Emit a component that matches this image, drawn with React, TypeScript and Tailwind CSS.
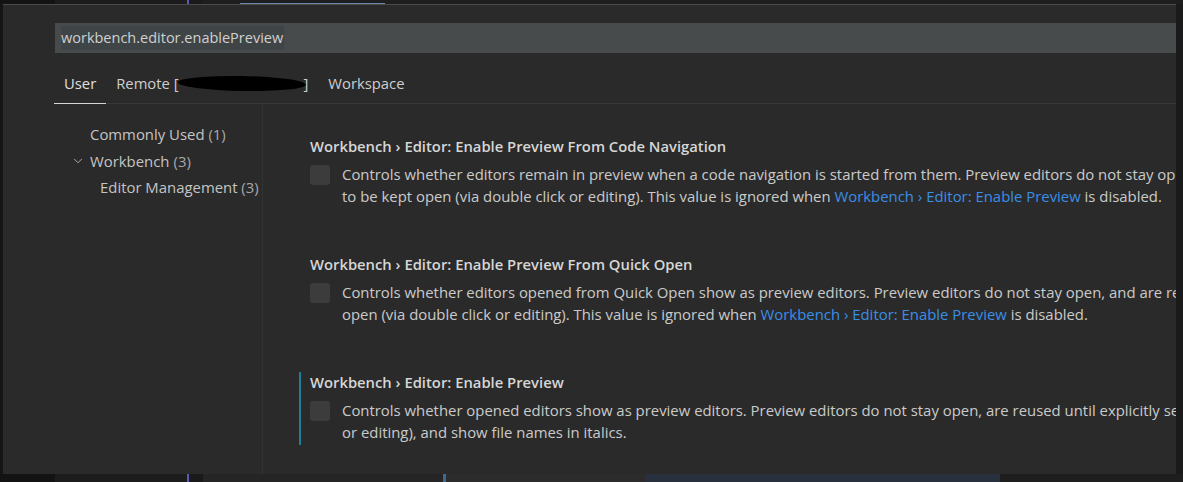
import { ChevronDown } from 'lucide-react';

const FONT = "font-['Open_Sans','Noto_Sans',sans-serif]";

type Piece = { text: string; link?: boolean };

const settings: { title: string; lines: Piece[][]; focused?: boolean }[] = [
  {
    title: 'Workbench › Editor: Enable Preview From Code Navigation',
    lines: [
      [
        {
          text: 'Controls whether editors remain in preview when a code navigation is started from them. Preview editors do not stay open, and are reused until explicitly set',
        },
      ],
      [
        { text: 'to be kept open (via double click or editing). This value is ignored when ' },
        { text: 'Workbench › Editor: Enable Preview', link: true },
        { text: ' is disabled.' },
      ],
    ],
  },
  {
    title: 'Workbench › Editor: Enable Preview From Quick Open',
    lines: [
      [
        {
          text: 'Controls whether editors opened from Quick Open show as preview editors. Preview editors do not stay open, and are reused until explicitly set to be kept',
        },
      ],
      [
        { text: 'open (via double click or editing). This value is ignored when ' },
        { text: 'Workbench › Editor: Enable Preview', link: true },
        { text: ' is disabled.' },
      ],
    ],
  },
  {
    title: 'Workbench › Editor: Enable Preview',
    focused: true,
    lines: [
      [
        {
          text: 'Controls whether opened editors show as preview editors. Preview editors do not stay open, are reused until explicitly set to be kept open (via double click',
        },
      ],
      [{ text: 'or editing), and show file names in italics.' }],
    ],
  },
];

const SettingItem = ({ title, lines, focused }: (typeof settings)[number]) => (
  <div
    className={`border-l-2 pl-[9px] pt-px pb-[2px] ${focused ? 'border-[#1f7f9a]' : 'border-transparent'}`}
  >
    <div className="text-[14.8px] leading-[18px] font-semibold text-[#d6d6d6] whitespace-nowrap">{title}</div>
    <div className="flex gap-3 mt-2">
      <div className="w-5 h-5 mt-[2px] shrink-0 rounded-[3px] bg-[#3c3c3c]" />
      <div className="text-[14.9px] leading-[22px] text-[#cacaca]">
        {lines.map((line, i) => (
          <div key={i} className="whitespace-nowrap">
            {line.map((p, j) => (
              <span key={j} className={p.link ? 'text-[#3a8ee6]' : ''}>
                {p.text}
              </span>
            ))}
          </div>
        ))}
      </div>
    </div>
  </div>
);

export default function App() {
  return (
    <div className={`w-[1183px] h-[482px] overflow-hidden bg-[#171717] flex flex-col ${FONT}`}>
      {/* top strip: neighbouring editor */}
      <div className="h-[4px] flex shrink-0">
        <div className="w-[55px] bg-[#131313]" />
        <div className="w-[132px] bg-[#1c1c1c]" />
        <div className="w-[2px] bg-[#5b5bb5]" />
        <div className="w-[14px] bg-[#1a1a1a]" />
        <div className="w-[37px] bg-[#1e1e1e]" />
        <div className="w-[145px] bg-[#1e1e1e] flex flex-col justify-end">
          <div className="h-px bg-[#6d86a8]" />
        </div>
        <div className="flex-1 bg-[#1e1e1e]" />
      </div>

      <div className="flex flex-1 min-h-0">
        <div className="w-[3px] bg-[#151515]" />
        {/* settings editor */}
        <div className="w-[1173px] flex flex-col bg-[#2a2a2a] border-t border-[#4b4b4b] overflow-hidden">
          <div className="pt-[18px] pl-[52px]">
            <div className="h-[30px] bg-[#474b4c] flex items-center pl-[6px] text-[14.5px] text-[#d0d0d0]">
              <span className="bg-[#3f4446] leading-[24px] pr-px">workbench.editor.enablePreview</span>
            </div>
          </div>

          {/* tabs */}
          <div className="ml-[51px] h-[51px] border-b border-[#383838] flex items-end text-[14.8px] text-[#cfcfcf]">
            <div className="px-[10px] h-[48px] pt-[8px] flex items-center border-b border-[#d6d6d6] -mb-px text-[#e0e0e0]">
              User
            </div>
            <div className="pl-[10px] h-[48px] pt-[8px] flex items-center">
              Remote [
              <span className="inline-block w-[128px] h-[15px] bg-black rounded-[50%] -mr-[2px] -ml-[1px] rotate-[1deg]" />
              ]
            </div>
            <div className="pl-[20px] h-[48px] pt-[8px] flex items-center">Workspace</div>
          </div>

          <div className="flex flex-1 min-h-0">
            {/* tree */}
            <div className="w-[260px] shrink-0 border-r border-[#323232] pt-[17px] text-[14.9px] leading-[26.5px] text-[#c4c4c4]">
              <div className="pl-[87px] whitespace-nowrap">
                Commonly Used <span className="text-[#a8a8a8]">(1)</span>
              </div>
              <div className="pl-[68px] flex items-center whitespace-nowrap">
                <ChevronDown className="w-[14px] h-[14px] mr-[5px] text-[#bdbdbd]" strokeWidth={1.5} />
                Workbench <span className="ml-1 text-[#a8a8a8]">(3)</span>
              </div>
              <div className="pl-[97px] whitespace-nowrap">
                Editor Management <span className="text-[#a8a8a8]">(3)</span>
              </div>
            </div>

            {/* settings list */}
            <div className="flex-1 pl-[36px] pt-[32px] flex flex-col gap-[45px] overflow-hidden">
              {settings.map((s) => (
                <SettingItem key={s.title} {...s} />
              ))}
            </div>
          </div>
        </div>
        <div className="flex-1 bg-[#1a1a1a]" />
      </div>

      {/* bottom strip: neighbouring editor */}
      <div className="h-[8px] flex shrink-0 text-[13px] leading-[20px] text-[#9a9a9a] overflow-hidden">
        <div className="w-[55px] bg-[#131313]" />
        <div className="w-[132px] bg-[#1c1c1c]" />
        <div className="w-[2px] bg-[#5b5bb5]" />
        <div className="w-[14px] bg-[#1a1a1a]" />
        <div className="w-[240px] bg-[#252525] pl-[70px] pt-[5px] whitespace-nowrap">Workbench (1)</div>
        <div className="w-[3px] bg-[#3d6a94]" />
        <div className="w-[199px] bg-[#2c2c2c] pl-[14px] pt-[5px] whitespace-nowrap">afterDelay</div>
        <div className="w-[355px] bg-[#28303d]" />
        <div className="flex-1 bg-[#1e1e1e]" />
      </div>
    </div>
  );
}
